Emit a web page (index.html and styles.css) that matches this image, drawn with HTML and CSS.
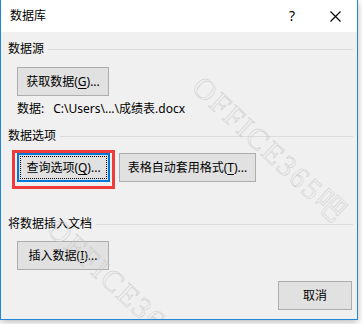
FILE: index.html
```html
<!DOCTYPE html>
<html lang="zh-CN">
<head>
<meta charset="utf-8">
<title>数据库</title>
<link rel="stylesheet" href="styles.css">
</head>
<body>
<div class="dialog">
  <div class="titlebar">
    <span class="title">数据库</span>
    <span class="tb-btn help">?</span>
    <span class="tb-btn close">
      <svg width="11" height="11" viewBox="0 0 11 11"><path d="M0.5 0.5 L10.5 10.5 M10.5 0.5 L0.5 10.5" stroke="#000" stroke-width="1.1" fill="none"/></svg>
    </span>
  </div>
  <div class="content">
    <div class="group-head first"><span>数据源</span><span class="rule"></span></div>
    <div class="indent row-btn1"><button class="btn w92">获取数据(<u>G</u>)...</button></div>
    <div class="indent data-path"><span>数据:</span><span class="path">C:\Users\...\成绩表.docx</span></div>
    <div class="group-head second"><span>数据选项</span><span class="rule"></span></div>
    <div class="indent btn-row">
      <button class="btn w92 focused">查询选项(<u>Q</u>)...</button>
      <button class="btn w137">表格自动套用格式(<u>T</u>)...</button>
    </div>
    <div class="group-head third"><span>将数据插入文档</span><span class="rule"></span></div>
    <div class="indent row-btn3"><button class="btn w92">插入数据(<u>I</u>)...</button></div>
    <div class="footer"><button class="btn w74">取消</button></div>
  </div>
  <div class="highlight"></div>
  <div class="watermark wm1">OFFICE365吧</div>
  <div class="watermark wm2">OFFICE365吧</div>
</div>
</body>
</html>
```
FILE: styles.css
```css
html, body {
  margin: 0;
  padding: 0;
  background: #ffffff;
}
body {
  width: 362px;
  height: 324px;
  overflow: hidden;
  font-family: "Noto Sans", "Noto Sans CJK SC", sans-serif;
  font-size: 12px;
  color: #000;
}
.dialog {
  position: relative;
  box-sizing: border-box;
  width: 358px;
  height: 320px;
  border: 1px solid #2486d6;
  border-top: none;
  background: #f0f0f0;
  display: flex;
  flex-direction: column;
  box-shadow: 0 2px 7px rgba(0, 0, 0, 0.28);
  overflow: hidden;
}
.titlebar {
  height: 32px;
  flex: none;
  background: #ffffff;
  display: flex;
  align-items: center;
  padding-left: 9px;
}
.title {
  flex: 1;
  line-height: 16px;
  padding-bottom: 1px;
}
.tb-btn {
  height: 32px;
  display: flex;
  align-items: center;
  justify-content: center;
}
.help {
  width: 44px;
  font-size: 14px;
  padding-bottom: 1px;
  box-sizing: border-box;
}
.close {
  width: 43px;
}
.content {
  flex: 1;
  display: flex;
  flex-direction: column;
  padding: 9px 4px 0 7px;
}
.group-head {
  display: flex;
  align-items: center;
  gap: 4px;
  height: 16px;
  line-height: 16px;
}
.group-head .rule {
  flex: 1;
  height: 1px;
  background: #dcdcdc;
  margin-top: 1px;
}
.group-head.second { margin-top: 11px; }
.group-head.third { margin-top: 34px; }
.indent {
  padding-left: 9px;
  display: flex;
}
.row-btn1 { margin-top: 10px; }
.data-path {
  margin-top: 5px;
  line-height: 16px;
}
.data-path .path { margin-left: 9px; }
.btn-row {
  margin-top: 9px;
  gap: 9px;
}
.row-btn3 { margin-top: 9px; }
.btn {
  box-sizing: border-box;
  height: 29px;
  margin: 0;
  padding: 0;
  border: 1px solid #adadad;
  background: #e1e1e1;
  font: inherit;
  color: #000;
  line-height: 27px;
  text-align: center;
}
.btn u { text-decoration-thickness: 1px; text-underline-offset: 2px; }
.w92 { width: 92px; }
.w137 { width: 137px; }
.w74 { width: 74px; }
.btn.focused {
  width: 93px;
  border: 2px solid #0078d7;
  line-height: 25px;
  outline: 1px dotted #000;
  outline-offset: -4px;
}
.footer {
  margin-top: 11px;
  display: flex;
  justify-content: flex-end;
  padding-right: 1px;
}
.highlight {
  position: absolute;
  left: 11px;
  top: 150px;
  width: 97px;
  height: 33px;
  border: 3px solid #ef3b3b;
  pointer-events: none;
}
.watermark {
  position: absolute;
  font-family: "Liberation Serif", "Noto Sans CJK SC", serif;
  font-size: 30px;
  line-height: 30px;
  letter-spacing: 2px;
  white-space: nowrap;
  color: transparent;
  -webkit-text-stroke: 0.45px #c8c8c8;
  transform-origin: 0 50%;
  transform: rotate(43deg);
  pointer-events: none;
}
.wm1 { left: 196px; top: 67px; }
.wm2 { left: 51px; top: 209px; }
```
